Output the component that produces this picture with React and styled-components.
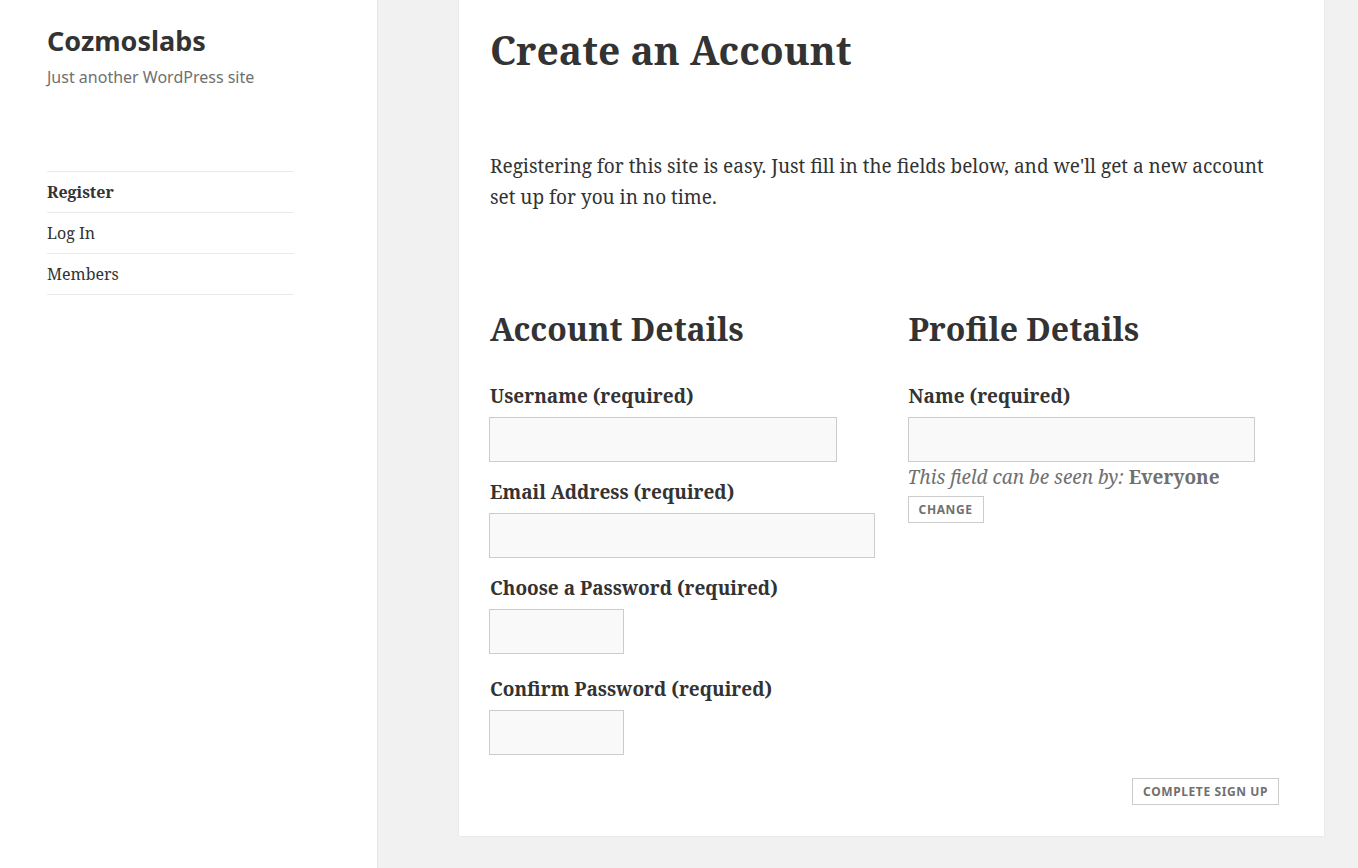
import React from "react";
import styled, { createGlobalStyle } from "styled-components";

const GlobalStyle = createGlobalStyle`
  html, body { margin: 0; padding: 0; background: #f1f1f1; }
  body {
    font-family: "Noto Serif", "DejaVu Serif", serif;
    color: #333;
    -webkit-font-smoothing: antialiased;
  }
  * { box-sizing: border-box; }
`;

const Page = styled.div`
  display: flex;
  align-items: flex-start;
  min-height: 868px;
`;

const Sidebar = styled.aside`
  width: 378px;
  flex-shrink: 0;
  min-height: 868px;
  align-self: stretch;
  background: #fff;
  border-right: 1px solid #e6e6e6;
  padding: 22px 83px 0 47px;
`;

const SiteTitle = styled.div`
  font-family: "Noto Sans", sans-serif;
  font-weight: 700;
  font-size: 27px;
  line-height: 38px;
  color: #333;
`;

const Tagline = styled.div`
  font-family: "Noto Sans", sans-serif;
  font-size: 16px;
  line-height: 26px;
  margin-top: 4px;
  color: #707070;
`;

const Nav = styled.nav`
  margin-top: 81px;
  border-top: 1px solid #eaeaea;
`;

const NavItem = styled.div`
  font-size: 16px;
  line-height: 40px;
  border-bottom: 1px solid #eaeaea;
  font-weight: ${(p) => (p.$current ? 700 : 400)};
  color: #333;
`;

const Main = styled.main`
  margin-left: 81px;
  width: 865px;
  margin-bottom: 32px;
`;

const Card = styled.article`
  background: #fff;
  box-shadow: 0 0 1px rgba(0, 0, 0, 0.18);
  height: 836px;
  padding: 22px 30px 0 30px;
`;

const Title = styled.h1`
  margin: 0 0 0 1px;
  font-size: 39px;
  line-height: 56px;
  font-weight: 700;
  color: #333;
`;

const Intro = styled.p`
  margin: 73px 0 0 1px;
  font-size: 19px;
  line-height: 31px;
  color: #333;
`;

const Columns = styled.div`
  display: flex;
  justify-content: space-between;
  margin-top: 94px;
`;

const Column = styled.section`
  width: 48%;
`;

const SectionTitle = styled.h2`
  margin: 0 0 32px 1px;
  font-size: 32px;
  line-height: 44px;
  font-weight: 700;
  color: #333;
`;

const Label = styled.label`
  display: block;
  font-size: 19px;
  font-weight: 700;
  line-height: 26px;
  margin-top: ${(p) => p.$top || 0}px;
  margin-bottom: 8px;
  padding-left: 1px;
`;

const Input = styled.input`
  display: block;
  width: ${(p) => p.$w};
  height: 45px;
  border: 1px solid #ccc;
  background: #f9f9f9;
  border-radius: 0;
  padding: 0 10px;
  margin: 0;
  font: inherit;
  outline: none;
`;

const Visibility = styled.div`
  font-size: 19px;
  line-height: 31px;
  color: #707070;
`;

const Em = styled.em`
  font-style: italic;
`;

const Strong = styled.strong`
  font-weight: 700;
`;

const SmallButton = styled.button`
  display: inline-block;
  font-family: "Noto Sans", sans-serif;
  font-weight: 700;
  font-size: 12px;
  letter-spacing: 0.05em;
  text-transform: uppercase;
  color: #707070;
  background: #fff;
  border: 1px solid #ccc;
  border-radius: 0;
  height: 27px;
  padding: 0 10px;
  margin-top: ${(p) => p.$top || 0}px;
  cursor: pointer;
`;

const Submit = styled.div`
  display: flex;
  justify-content: flex-end;
  padding-right: 15px;
  margin-top: 23px;
`;

export default function App() {
  return (
    <>
      <GlobalStyle />
      <Page>
        <Sidebar>
          <SiteTitle>Cozmoslabs</SiteTitle>
          <Tagline>Just another WordPress site</Tagline>
          <Nav>
            <NavItem $current>Register</NavItem>
            <NavItem>Log In</NavItem>
            <NavItem>Members</NavItem>
          </Nav>
        </Sidebar>
        <Main>
          <Card>
            <Title>Create an Account</Title>
            <Intro>
              Registering for this site is easy. Just fill in the fields below, and we'll get a new account set up for you in no time.
            </Intro>
            <Columns>
              <Column>
                <SectionTitle>Account Details</SectionTitle>
                <Label>Username (required)</Label>
                <Input $w="90%" type="text" />
                <Label $top={17}>Email Address (required)</Label>
                <Input $w="100%" type="text" />
                <Label $top={17}>Choose a Password (required)</Label>
                <Input $w="135px" type="password" />
                <Label $top={22}>Confirm Password (required)</Label>
                <Input $w="135px" type="password" />
              </Column>
              <Column>
                <SectionTitle>Profile Details</SectionTitle>
                <Label>Name (required)</Label>
                <Input $w="90%" type="text" />
                <Visibility>
                  <Em>This field can be seen by: </Em>
                  <Strong>Everyone</Strong>
                </Visibility>
                <SmallButton $top={3}>Change</SmallButton>
              </Column>
            </Columns>
            <Submit>
              <SmallButton>Complete Sign Up</SmallButton>
            </Submit>
          </Card>
        </Main>
      </Page>
    </>
  );
}
